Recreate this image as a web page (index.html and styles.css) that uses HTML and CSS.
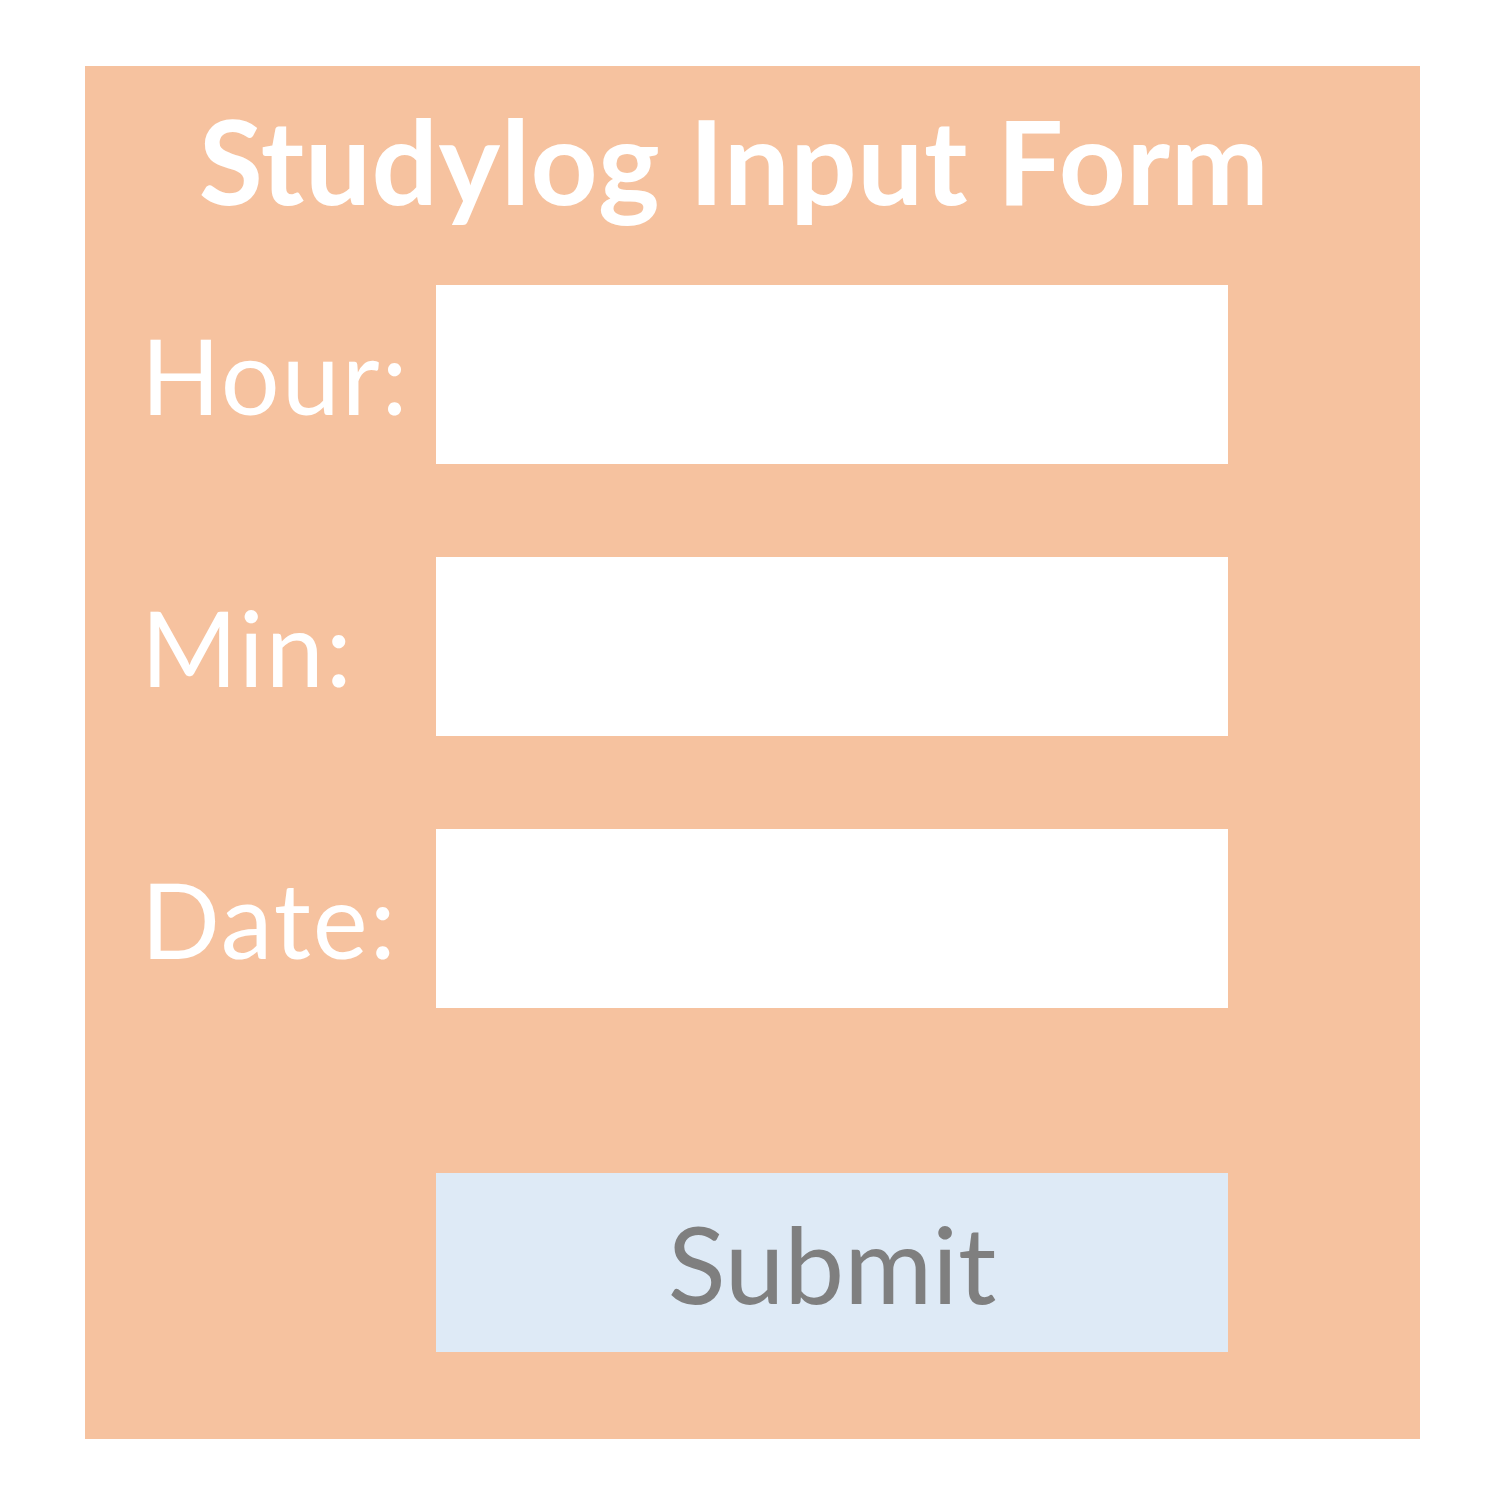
FILE: index.html
```html
<!DOCTYPE html>
<html lang="en">
<head>
    <meta charset="UTF-8">
    <meta name="viewport" content="width=device-width, initial-scale=1.0">
    <title>Studylog Input Form</title>
    <link rel="stylesheet" href="styles.css">
</head>
<body>
    <div class="panel">
        <h1>Studylog Input Form</h1>
        <form class="log-form">
            <label for="hour">Hour:</label>
            <input type="text" id="hour" name="hour">
            <label for="min">Min:</label>
            <input type="text" id="min" name="min">
            <label for="date">Date:</label>
            <input type="text" id="date" name="date">
            <button type="submit">Submit</button>
        </form>
    </div>
</body>
</html>
```

FILE: styles.css
```css
body {
    font-family: Lato, "Open Sans", sans-serif;
    background-color: #ffffff;
    margin: 0;
    padding: 66px 85px;
}

.panel {
    background-color: #f6c29f;
    padding: 36px 192px 87px 60px;
}

h1 {
    margin: 0 -192px 66px 0;
    padding-right: 97px;
    font-size: 117px;
    line-height: 117px;
    font-weight: 700;
    letter-spacing: 0.6px;
    color: #ffffff;
    text-align: center;
    white-space: nowrap;
}

.log-form {
    display: grid;
    grid-template-columns: 291px 792px;
    row-gap: 93px;
    align-items: center;
}

label {
    font-size: 104px;
    letter-spacing: 2px;
    color: #ffffff;
    margin-left: -4px;
}

input {
    height: 179px;
    border: none;
    margin: 0;
    padding: 0 20px;
    background-color: #ffffff;
    font-size: 60px;
    box-sizing: border-box;
}

button {
    grid-column: 2;
    height: 179px;
    margin-top: 72px;
    border: none;
    background-color: #deeaf6;
    color: #7f7f7f;
    font-family: Lato, "Open Sans", sans-serif;
    font-size: 107px;
    cursor: pointer;
}
```
